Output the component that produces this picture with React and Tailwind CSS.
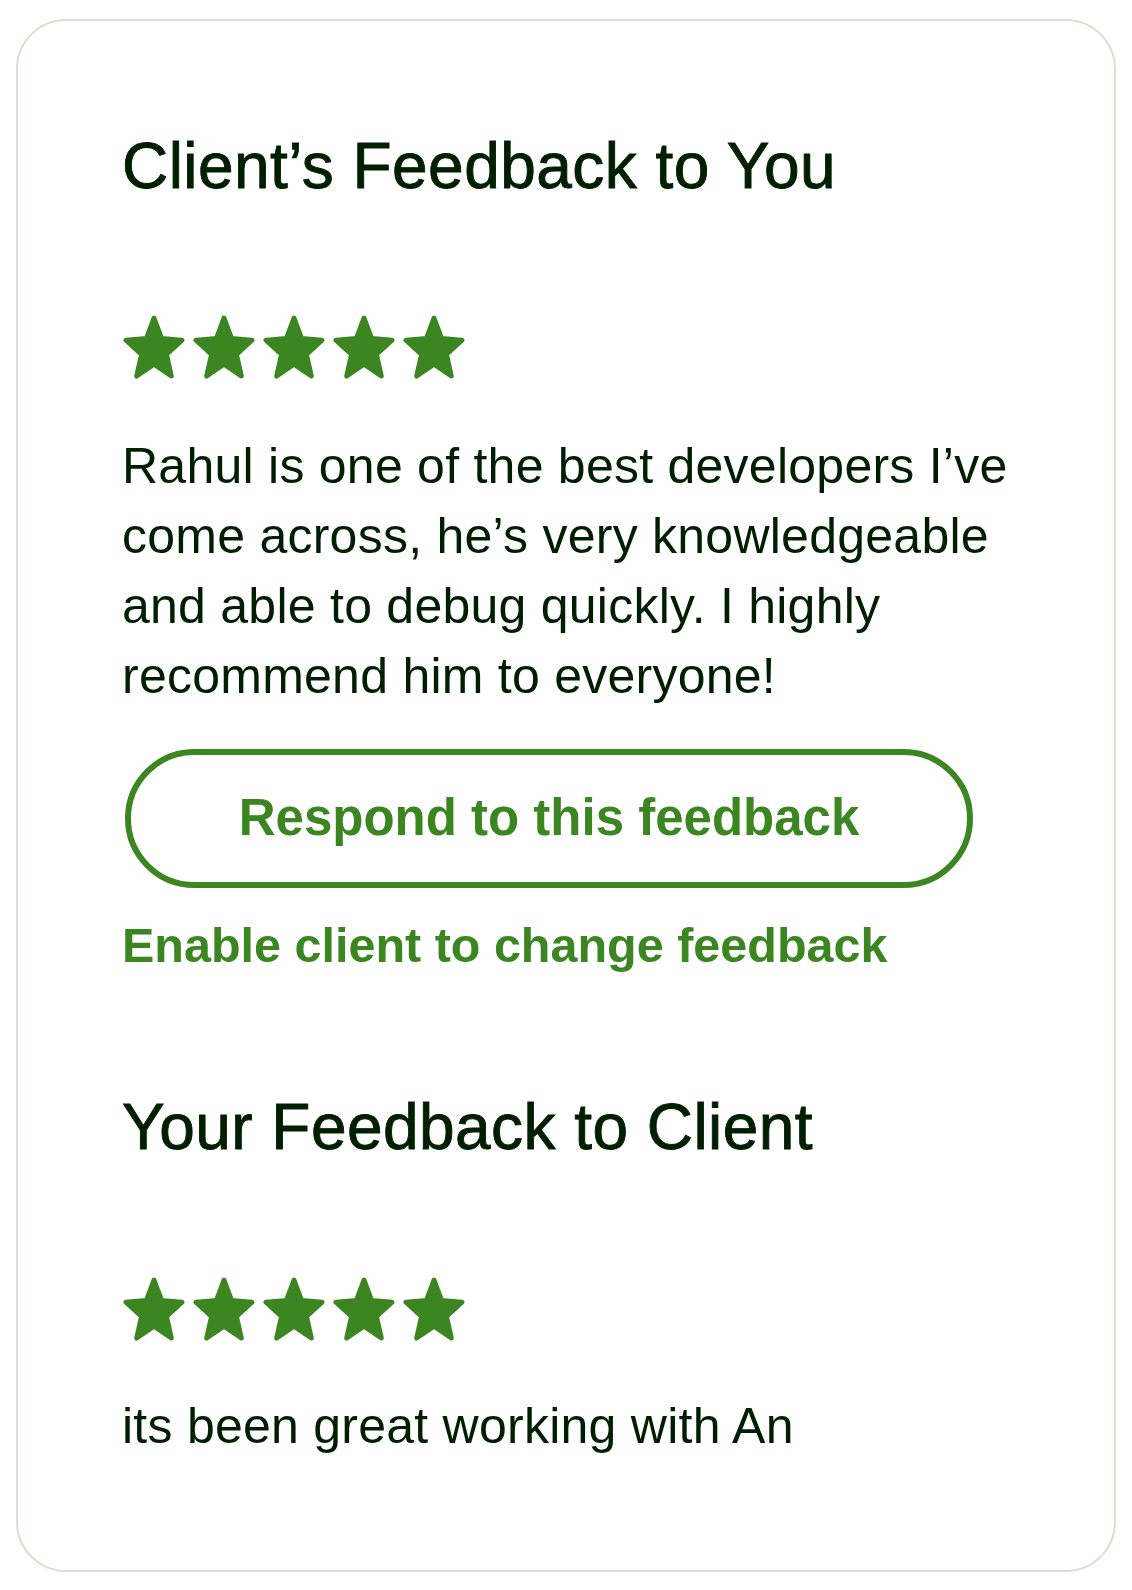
import React from 'react';

const STAR_PATH =
  'M32 3 L39.6 23.6 L60 25.2 L44.4 39.4 L49.3 61 L32 49.2 L14.7 61 L19.6 39.4 L4 25.2 L24.4 23.6 Z';

const Star = () => (
  <svg viewBox="0 0 64 64" className="w-16 h-16 shrink-0" aria-hidden="true">
    <path
      d={STAR_PATH}
      fill="#3c8622"
      stroke="#3c8622"
      strokeWidth="5"
      strokeLinejoin="round"
    />
  </svg>
);

const Stars = ({ count = 5, className = '' }) => (
  <div className={`flex gap-[6px] ${className}`}>
    {Array.from({ length: count }).map((_, i) => (
      <Star key={i} />
    ))}
  </div>
);

// headings are a touch heavier than the body copy
const headingClass =
  'text-[64px] leading-[64px] font-normal tracking-[0.45px] text-[#001e00] [-webkit-text-stroke:0.9px_#001e00]';

const FeedbackCard = () => {
  return (
    <div className="border-2 border-[#d5e0d5] rounded-[50px] bg-white pl-[104px] pr-[96px] pt-[113px] pb-[109px]">
      <h2 className={headingClass}>Client’s Feedback to You</h2>

      <Stars className="mt-[117px]" />

      <p className="mt-[52px] text-[50px] leading-[70px] tracking-[0.25px] text-[#001e00]">
        Rahul is one of the best developers I’ve come across, he’s very
        knowledgeable and able to debug quickly. I highly recommend him to
        everyone!
      </p>

      <button
        type="button"
        className="mt-[38px] ml-[3px] w-[848px] h-[139px] flex items-center justify-center rounded-full border-[6px] border-[#3c8622] bg-white text-[51px] leading-[51px] font-bold text-[#3c8622] pb-[3px]"
      >
        Respond to this feedback
      </button>

      <a
        href="#"
        className="block mt-[33px] text-[48.5px] leading-[48px] font-bold text-[#3c8622]"
      >
        Enable client to change feedback
      </a>

      <h2 className={`mt-[126px] ${headingClass}`}>Your Feedback to Client</h2>

      <Stars className="mt-[118px]" />

      <p className="mt-[50px] text-[50px] leading-[70px] tracking-[0.25px] text-[#001e00]">
        its been great working with An
      </p>
    </div>
  );
};

export default function App() {
  return (
    <div className="min-h-screen bg-white px-4 pt-[19px] pb-[18px] font-['Liberation_Sans',Arial,sans-serif]">
      <FeedbackCard />
    </div>
  );
}
